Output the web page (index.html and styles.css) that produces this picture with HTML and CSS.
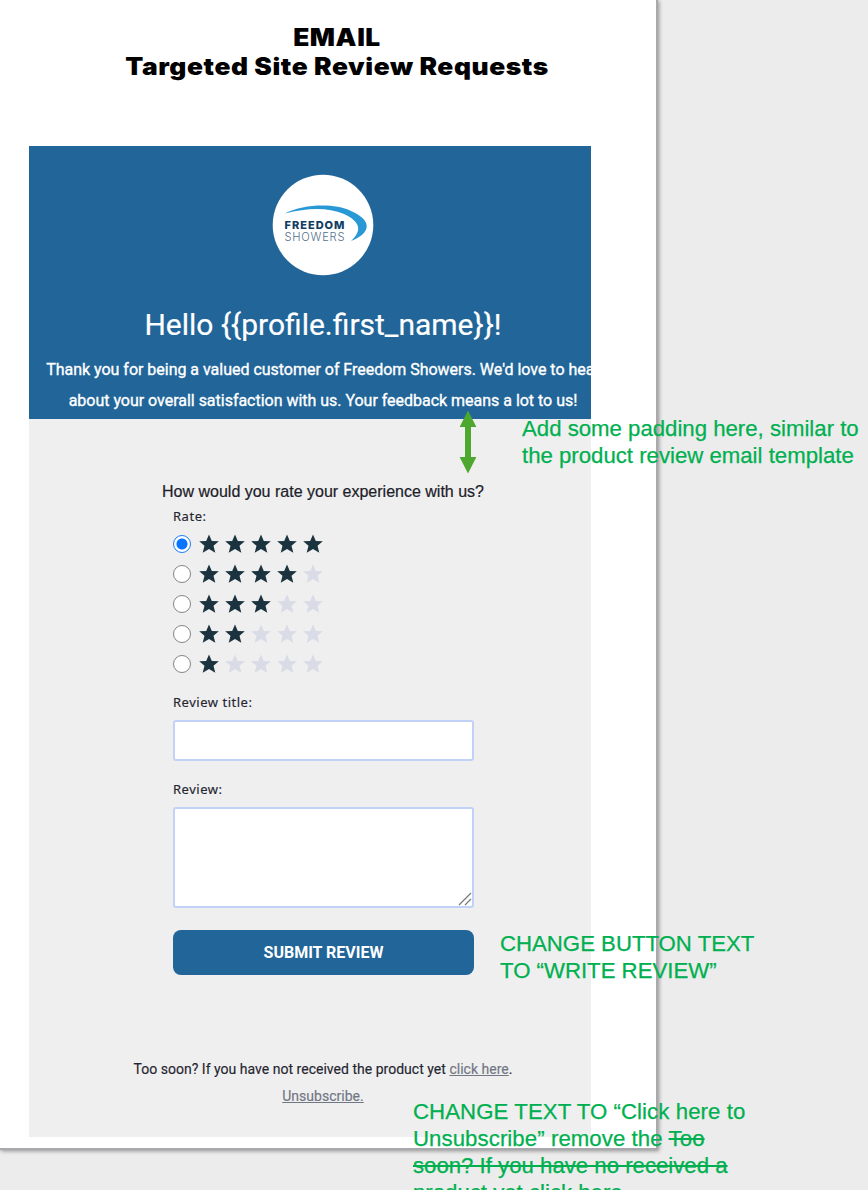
FILE: index.html
```html
<!DOCTYPE html>
<html lang="en">
<head>
<meta charset="utf-8">
<title>Targeted Site Review Requests</title>
<link rel="stylesheet" href="styles.css">
</head>
<body>
<svg class="defs" width="0" height="0"><symbol id="star" viewBox="0 0 20 20"><path d="M10 .5 12.8 7l7 .3-5.3 4.5 1.8 7L10 15.1l-6.3 3.7 1.8-7L.2 7.3l7-.3z"/></symbol></svg>
<main class="sheet">
  <h1 class="title"><span class="t1">EMAIL</span><span class="t2">Targeted Site Review Requests</span></h1>
  <section class="email">
    <div class="content">
      <header class="banner">
        <svg class="logo" width="102" height="102" viewBox="0 0 102 102">
          <circle cx="51" cy="51" r="50.3" fill="#fff"/>
          <path d="M13 39.5C32 30 62 29 79 37C100 46 100 59 79 67C90 57 89 48 72 40C55 33 35 34 13 39.5Z" fill="#2999d6"/>
          <text class="logo-bold" x="12.5" y="54.5" textLength="60">FREEDOM</text>
          <text class="logo-thin" x="12.5" y="66.5" textLength="60">SHOWERS</text>
        </svg>
        <h2 class="hello"><span>Hello {{profile.first_name}}!</span></h2>
        <p class="intro"><span class="i1">Thank you for being a valued customer of Freedom Showers. We'd love to hear</span><span class="i2">about your overall satisfaction with us. Your feedback means a lot to us!</span></p>
      </header>
      <p class="question"><span>How would you rate your experience with us?</span></p>
      <form class="form">
        <div class="label rate-label"><span>Rate:</span></div>
        <div class="rates">
          <div class="rate s5"><i class="radio on"></i><svg><use href="#star"/></svg><svg><use href="#star"/></svg><svg><use href="#star"/></svg><svg><use href="#star"/></svg><svg><use href="#star"/></svg></div>
          <div class="rate s4"><i class="radio"></i><svg><use href="#star"/></svg><svg><use href="#star"/></svg><svg><use href="#star"/></svg><svg><use href="#star"/></svg><svg><use href="#star"/></svg></div>
          <div class="rate s3"><i class="radio"></i><svg><use href="#star"/></svg><svg><use href="#star"/></svg><svg><use href="#star"/></svg><svg><use href="#star"/></svg><svg><use href="#star"/></svg></div>
          <div class="rate s2"><i class="radio"></i><svg><use href="#star"/></svg><svg><use href="#star"/></svg><svg><use href="#star"/></svg><svg><use href="#star"/></svg><svg><use href="#star"/></svg></div>
          <div class="rate s1"><i class="radio"></i><svg><use href="#star"/></svg><svg><use href="#star"/></svg><svg><use href="#star"/></svg><svg><use href="#star"/></svg><svg><use href="#star"/></svg></div>
        </div>
        <div class="label title-label"><span>Review title:</span></div>
        <div class="box input"></div>
        <div class="label review-label"><span>Review:</span></div>
        <div class="box area"><svg width="14" height="14" viewBox="0 0 14 14"><path d="M1 13 13 1M7 13l6-6" stroke="#777" stroke-width="1.2" fill="none"/></svg></div>
        <div class="submit"><span>SUBMIT REVIEW</span></div>
      </form>
      <p class="foot f1"><span>Too soon? If you have not received the product yet <a>click here</a>.</span></p>
      <p class="foot f2"><a>Unsubscribe.</a></p>
    </div>
  </section>
</main>
<svg class="arrow" width="18" height="64" viewBox="0 0 18 64"><path d="M9 .5 17.4 17H12v30h5.4L9 63.5.6 47H6V17H.6z" fill="#4ea72e"/></svg>
<div class="note n1"><span class="a">Add some padding here, similar to</span><span class="b">the product review email template</span></div>
<div class="note n2"><span class="a">CHANGE BUTTON TEXT</span><span class="b">TO “WRITE REVIEW”</span></div>
<div class="note n3"><span class="a">CHANGE TEXT TO “Click here to</span><span class="b">Unsubscribe” remove the <s>Too</s></span><span class="c"><s>soon? If you have no received a</s></span><span class="d">product yet click here</span></div>
</body>
</html>
```
FILE: styles.css
```css
* { box-sizing: border-box; }
body { margin: 0; width: 868px; height: 1190px; overflow: hidden; position: relative; background: #ececec; font-family: "Liberation Sans", Arial, sans-serif; }
h1, h2, p { margin: 0; font-weight: 400; }
.defs { position: absolute; }
.sheet { width: 658px; height: 1150px; background: #fff; border-right: 2px solid #a9a9ad; border-bottom: 2px solid #a9a9ad; box-shadow: 1px 1px 4px rgba(0,0,0,.4); padding: 23px 0 0; }
.title { width: 674px; height: 123px; text-align: center; font: 900 24px/29px Inter, "Liberation Sans", sans-serif; letter-spacing: .52px; color: #000; white-space: nowrap; transform: scaleX(1.098); }
.title span { display: block; }
.email { margin-left: 29px; width: 562px; height: 991px; background: #efefef; overflow: hidden; }
.content { width: 588px; }
.banner { height: 273px; background: #216599; color: #fff; text-align: center; padding-top: 28px; font-family: Roboto, sans-serif; }
.logo { display: block; margin: 0 auto; }
.logo-bold { font: 800 11px Inter, sans-serif; fill: #123c61; }
.logo-thin { font: 300 11.2px Inter, sans-serif; fill: #52718b; }
.hello { font-size: 30px; line-height: 36px; margin-top: 31px; white-space: nowrap; -webkit-text-stroke: .2px #fff; }
.intro { font-size: 16px; line-height: 31px; margin-top: 11px; white-space: nowrap; letter-spacing: -.02px; -webkit-text-stroke: .35px #fff; }
.intro span { display: block; }
.question { text-align: center; font: 16px/20px "Liberation Sans", sans-serif; margin-top: 63px; color: #202028; white-space: nowrap; -webkit-text-stroke: .2px #202028; }
.form { margin-left: 144px; width: 301px; }
.label { font: 13px/18px "Noto Sans", sans-serif; letter-spacing: .52px; color: #252531; white-space: nowrap; -webkit-text-stroke: .15px #252531; }
.rate-label { margin-top: 5px; }
.rates { margin-top: 4px; }
.rate { display: flex; align-items: center; height: 30px; }
.radio { width: 18px; height: 18px; border: 1px solid #858585; border-radius: 50%; background: #fff; margin: 0 8px 1px 0; }
.radio.on { border: 1px solid #1a7bf5; background: radial-gradient(circle, #0575ff 0 5px, #fff 6px); }
.rate svg { width: 20px; height: 20px; margin-right: 6px; fill: #1b333f; }
.s4 svg:nth-of-type(n+5), .s3 svg:nth-of-type(n+4), .s2 svg:nth-of-type(n+3), .s1 svg:nth-of-type(n+2) { fill: #d9dbe6; }
.title-label { margin-top: 14px; }
.box { background: #fff; border: 2px solid #c1d1f7; border-radius: 3px; }
.input { height: 41px; margin-top: 9px; }
.review-label { margin-top: 19px; }
.area { height: 101px; margin-top: 9px; display: flex; align-items: flex-end; justify-content: flex-end; }
.submit { height: 45px; margin-top: 22px; border-radius: 8px; background: #216599; color: #fff; font: 700 16px/45px Roboto, sans-serif; text-align: center; }
.foot { text-align: center; font: 14px/27px Roboto, sans-serif; letter-spacing: .02px; color: #25252f; white-space: nowrap; -webkit-text-stroke: .15px; }
.f1 { margin-top: 81px; }
.foot a { color: #717684; text-decoration: underline; }
.arrow { position: absolute; left: 459px; top: 410px; }
.note { position: absolute; color: #00b050; font-size: 22.2px; line-height: 27px; white-space: nowrap; -webkit-text-stroke: .25px #00b050; }
.note span { display: block; }
.n1 { left: 522px; top: 415px; }
.n2 { left: 500px; top: 930px; }
.n3 { left: 413px; top: 1098px; }
.n3 .a, .n3 .b { letter-spacing: .08px; }
```
